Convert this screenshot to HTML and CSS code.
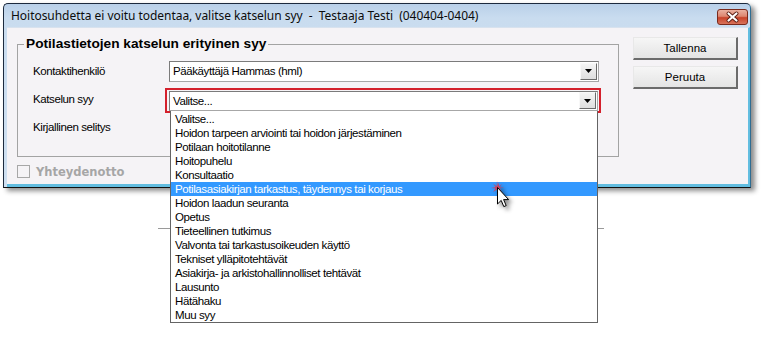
FILE: index.html
```html
<!DOCTYPE html>
<html lang="fi">
<head>
<meta charset="utf-8">
<title>Hoitosuhdetta ei voitu todentaa</title>
<link rel="stylesheet" href="styles.css">
</head>
<body>
<div class="screen">
  <div class="ghost-line"></div>
  <div class="window">
    <div class="titlebar">
      <span class="title">Hoitosuhdetta ei voitu todentaa, valitse katselun syy&nbsp; -&nbsp; Testaaja Testi&nbsp; (040404-0404)</span>
      <span class="close">
        <svg width="29" height="14" viewBox="0 0 29 14">
          <path d="M10.5 3.5 L18.5 10.5 M18.5 3.5 L10.5 10.5" stroke="#5a1c12" stroke-width="4" stroke-linecap="round"/>
          <path d="M10.5 3.5 L18.5 10.5 M18.5 3.5 L10.5 10.5" stroke="#ffffff" stroke-width="2.2" stroke-linecap="round"/>
        </svg>
      </span>
    </div>
    <div class="client">
      <div class="main">
        <fieldset class="group">
          <legend>Potilastietojen katselun erityinen syy</legend>
          <div class="rows">
            <div class="row">
              <span class="label">Kontaktihenkilö</span>
              <div class="combo">
                <span class="value">Pääkäyttäjä Hammas (hml)</span>
                <span class="drop"><svg width="7" height="4" viewBox="0 0 7 4"><path d="M0 0 H7 L3.5 4 Z" fill="#000"/></svg></span>
              </div>
            </div>
            <div class="row">
              <span class="label">Katselun syy</span>
              <div class="focus">
                <div class="combo">
                  <span class="value">Valitse...</span>
                  <span class="drop"><svg width="7" height="4" viewBox="0 0 7 4"><path d="M0 0 H7 L3.5 4 Z" fill="#000"/></svg></span>
                </div>
                <ul class="list">
                  <li>Valitse...</li>
                  <li>Hoidon tarpeen arviointi tai hoidon järjestäminen</li>
                  <li>Potilaan hoitotilanne</li>
                  <li>Hoitopuhelu</li>
                  <li>Konsultaatio</li>
                  <li class="selected">Potilasasiakirjan tarkastus, täydennys tai korjaus</li>
                  <li>Hoidon laadun seuranta</li>
                  <li>Opetus</li>
                  <li>Tieteellinen tutkimus</li>
                  <li>Valvonta tai tarkastusoikeuden käyttö</li>
                  <li>Tekniset ylläpitotehtävät</li>
                  <li>Asiakirja- ja arkistohallinnolliset tehtävät</li>
                  <li>Lausunto</li>
                  <li>Hätähaku</li>
                  <li>Muu syy</li>
                </ul>
              </div>
            </div>
            <div class="row">
              <span class="label">Kirjallinen selitys</span>
            </div>
          </div>
        </fieldset>
        <div class="check">
          <span class="box"></span>
          <span class="check-label">Yhteydenotto</span>
        </div>
      </div>
      <div class="buttons">
        <button class="btn" type="button">Tallenna</button>
        <button class="btn" type="button">Peruuta</button>
      </div>
    </div>
  </div>
  <svg class="cursor" width="22" height="28" viewBox="0 0 22 28">
    <path d="M6 0 L6.8 5 L8 1 L8 5.5 L11 3 L8.6 6.5 L13 6.5 L8.6 7.5 L11 11 L7.6 8.6 L6.5 13 L5.8 8.5 L2 11 L4.6 7.6 L0 7 L4.6 6 L2 2.5 L5.6 5.2 Z" fill="#e4364a" opacity="0.85"/>
    <path d="M6.5 6.5 L6.5 23 L10.2 19.4 L12.8 25.6 L15.2 24.6 L12.6 18.6 L17.6 18.6 Z" fill="#ffffff" stroke="#000" stroke-width="1" stroke-linejoin="miter"/>
  </svg>
</div>
</body>
</html>
```
FILE: styles.css
```css
* { box-sizing: border-box; }

html, body {
  margin: 0;
  padding: 0;
  background: #ffffff;
}

.screen {
  position: relative;
  width: 765px;
  height: 340px;
  overflow: hidden;
  background: #ffffff;
  font-family: "Liberation Sans", Arial, sans-serif;
  font-size: 11.5px;
  letter-spacing: -0.4px;
  color: #000;
}

.ghost-line {
  position: absolute;
  left: 158px;
  top: 228px;
  width: 446px;
  height: 1px;
  background: #9a9a9a;
}

.window {
  position: relative;
  margin: 3px 0 0 3px;
  width: 748px;
  height: 185px;
  border: 1px solid #1c2a3e;
  border-right-color: #2f6d92;
  border-bottom-color: #101010;
  border-radius: 5px 5px 0 0;
  background: linear-gradient(#b9d0e9, #c9dcef 14px, #cfe0f1);
  padding: 0 0 0 3px;
  box-shadow: 4px 3px 5px rgba(0, 0, 0, 0.45);
  display: flex;
  flex-direction: column;
}

.titlebar {
  height: 23px;
  display: flex;
  align-items: center;
  justify-content: space-between;
  padding: 0 2px 0 4px;
}

.title {
  font-family: "Noto Sans", "Liberation Sans", sans-serif;
  font-size: 12px;
  letter-spacing: -0.04px;
  color: #0c0c0c;
  white-space: pre;
}

.close {
  width: 31px;
  height: 16px;
  margin-top: 2px;
  border: 1px solid #7a2a1c;
  border-radius: 3px;
  background: linear-gradient(#eab1a1, #dd8670 45%, #c8432a 55%, #d8735a);
  display: flex;
  align-items: center;
  justify-content: center;
}

.client {
  flex: 1;
  display: flex;
  align-items: flex-start;
  background: #f5f3f6;
  border-top: 1px solid #d8e2ee;
  border-right: 2px solid #62bde0;
  border-bottom: 3px solid #62bde0;
  padding-left: 10px;
}

.main {
  width: 602px;
}

.group {
  margin: 8px 0 0 0;
  padding: 0;
  width: 602px;
  border: 1px solid #a3a3a3;
  min-width: 0;
}

.group legend {
  margin-left: 6px;
  padding: 0 2px;
  font-size: 13.7px;
  letter-spacing: 0;
  line-height: 16px;
  font-weight: bold;
  color: #000;
}

.rows {
  padding: 5px 0 15px 15px;
}

.row {
  height: 28px;
  display: flex;
  align-items: center;
}

.label {
  width: 136px;
  flex: none;
}

.combo {
  width: 430px;
  height: 21px;
  display: flex;
  align-items: center;
  justify-content: space-between;
  background: #ffffff;
  border: 1px solid #a7a7a7;
  border-top-color: #7b7b7b;
  border-left-color: #7b7b7b;
  padding: 0 1px 0 3px;
}

.drop {
  width: 17px;
  height: 17px;
  display: flex;
  align-items: center;
  justify-content: center;
  background: linear-gradient(#f4f4f4, #dedede);
  border: 1px solid #f8f8f8;
  border-right-color: #6a6a6a;
  border-bottom-color: #6a6a6a;
}

.focus {
  position: relative;
  margin-left: -4px;
  margin-top: 2px;
  border: 2px solid #d4202c;
  padding: 1px 1px 0 2px;
}

.focus .combo {
  width: 429px;
  height: 20px;
}

.list {
  position: absolute;
  top: 100%;
  left: 3px;
  width: 428px;
  margin: 0;
  padding: 1px 0 0 0;
  list-style: none;
  background: #ffffff;
  border: 1px solid #646464;
  border-top: none;
  z-index: 5;
}

.list li {
  height: 14px;
  line-height: 14px;
  padding-left: 4px;
  white-space: nowrap;
}

.list li.selected {
  background: #3399ff;
  color: #ffffff;
}

.check {
  display: flex;
  align-items: center;
  margin-top: 8px;
  height: 13px;
}

.box {
  width: 13px;
  height: 13px;
  border: 1px solid #a7a7a7;
  background: #f5f3f6;
  margin-right: 6px;
}

.check-label {
  font-family: "DejaVu Sans", Verdana, sans-serif;
  font-weight: bold;
  font-size: 11.5px;
  letter-spacing: 0;
  color: #a6a6a6;
}

.buttons {
  display: flex;
  flex-direction: column;
  gap: 6px;
  margin: 9px 0 0 14px;
}

.btn {
  width: 105px;
  height: 23px;
  padding: 0;
  font-family: "Liberation Sans", Arial, sans-serif;
  font-size: 11.5px;
  letter-spacing: 0;
  color: #000;
  background: linear-gradient(#f6f6f6, #e4e4e4);
  border: 1px solid #e8e8e8;
  border-right: 2px solid #6b6b6b;
  border-bottom: 2px solid #6b6b6b;
  border-radius: 0;
}

.cursor {
  position: absolute;
  left: 491px;
  top: 181px;
  z-index: 10;
  filter: drop-shadow(3px 3px 2px rgba(0, 0, 0, 0.45));
}
```
